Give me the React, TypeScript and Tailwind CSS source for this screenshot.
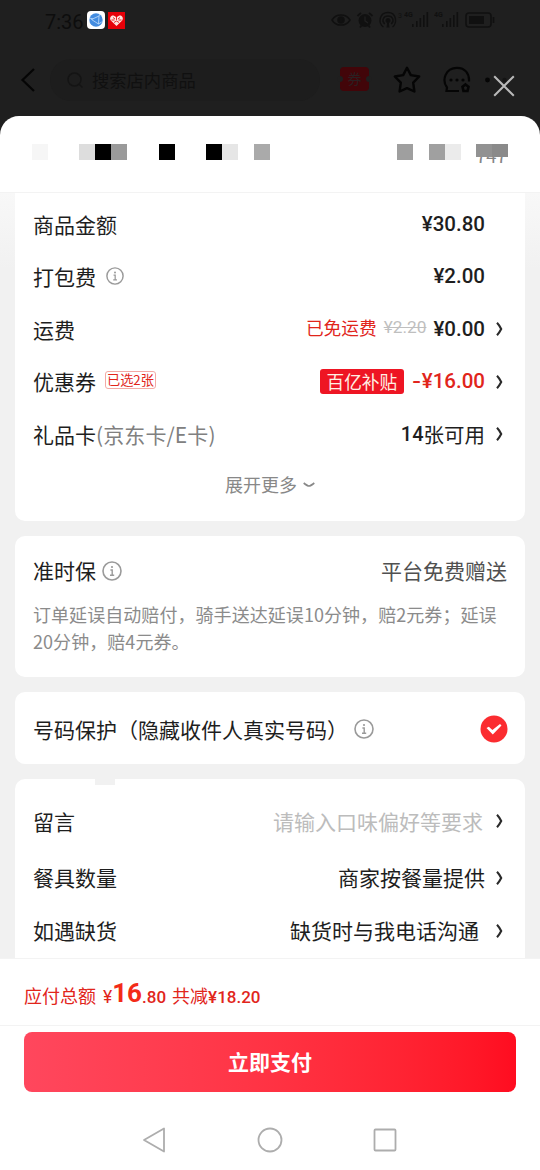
import React from 'react';

const mosaic = [
  { size: 'w-4 ml-8', color: 'bg-[#f6f6f6]' },
  { size: 'w-4 ml-[31px]', color: 'bg-[#dddddd]' },
  { size: 'w-4', color: 'bg-black' },
  { size: 'w-4', color: 'bg-[#9a9a9a]' },
  { size: 'w-4 ml-8', color: 'bg-black' },
  { size: 'w-4 ml-[31px]', color: 'bg-black' },
  { size: 'w-4', color: 'bg-[#e6e6e6]' },
  { size: 'w-4 ml-4', color: 'bg-[#aaaaaa]' },
  { size: 'w-4 ml-[127px]', color: 'bg-[#9f9f9f]' },
  { size: 'w-4 ml-4', color: 'bg-[#a0a0a0]' },
  { size: 'w-4', color: 'bg-[#ebebeb]' },
];

const InfoIcon: React.FC<{ className: string }> = ({ className }) => (
  <svg viewBox="0 0 20 20" className={`shrink-0 ${className}`} fill="none" stroke="#9a9a9a">
    <circle cx="10" cy="10" r="9" strokeWidth="1.6" />
    <circle cx="10" cy="6" r="1.1" fill="#9a9a9a" stroke="none" />
    <path d="M8.4 9H10.2V14M8 14.2H12.2" strokeWidth="1.4" />
  </svg>
);

const Chevron = () => (
  <svg viewBox="0 0 8 16" className="w-2 h-4 ml-[11px] shrink-0" fill="none" stroke="#2a2a2a" strokeWidth="2.1">
    <path d="M1 1.8C2.6 3.5 4.2 6 5.2 8C4.2 10 2.6 12.5 1 14.2" />
  </svg>
);

interface RowProps {
  label: React.ReactNode;
  arrow?: boolean;
  className?: string;
  children: React.ReactNode;
}

const Row: React.FC<RowProps> = ({ label, arrow = false, className = 'h-[52.5px]', children }) => (
  <div className={`flex items-center justify-between pl-[18px] pr-[21px] ${className}`}>
    <div className="flex items-center">{label}</div>
    <div className="flex items-center">
      {children}
      {arrow ? <Chevron /> : <div className="w-[19px]" />}
    </div>
  </div>
);

interface PriceProps {
  size?: string;
  className?: string;
  children: React.ReactNode;
}

const Price: React.FC<PriceProps> = ({ size = 'text-[20.5px] font-medium', className = '', children }) => (
  <span className={`font-[Roboto,'Noto_Sans_CJK_SC',sans-serif] ${size} ${className}`}>{children}</span>
);

const Signal = () => (
  <svg viewBox="0 0 26 18" className="w-[26px] h-[18px]" fill="#101010">
    <text x="0" y="6" fontSize="7" fontFamily="Roboto, sans-serif" fontWeight="700">4G</text>
    <rect x="8" y="13" width="1.6" height="3" />
    <rect x="12" y="10" width="1.6" height="6" />
    <rect x="15.5" y="7" width="1.6" height="9" />
    <rect x="19" y="4" width="1.6" height="12" />
    <rect x="22.5" y="1" width="1.6" height="15" />
  </svg>
);

const StatusBar = () => (
  <div className="h-10 flex items-center pl-[45px] pr-[45px]">
    <span className="w-[42px] font-[Roboto,sans-serif] text-[20px] leading-none text-[#0d0d0d] pt-[3px]">7:36</span>
    {/* Running app badges */}
    <svg viewBox="0 0 18 18" className="w-[18px] h-[18px]">
      <rect width="18" height="18" rx="4" fill="#fff" />
      <circle cx="9" cy="9" r="6.7" fill="#438ce0" />
      <path d="M4.5 8.5L12 5L11.5 13ZM2.5 7L6 8M12 5L13 3M11.5 13L14.7 11" fill="none" stroke="#b7d7fa" strokeWidth="0.9" />
    </svg>
    <svg viewBox="0 0 17 17" className="w-[17px] h-[17px] ml-[3px]">
      <rect width="17" height="17" fill="#e60008" />
      <path d="M8.5 14L2.8 8.5C1 6 3.2 2.8 6 3.7L8.5 5.2L11 3.7C13.8 2.8 16 6 14.2 8.5Z" fill="#ffe3df" />
      <path d="M5 5.5L7 7M12 5.5L10 7M3.5 8H6.5M13.5 8H10.5M8.5 5V8M6 10.5L8.5 9L11 10.5" stroke="#e62a2a" strokeWidth="1" fill="none" />
    </svg>
    <div className="flex items-center ml-auto">
      <svg viewBox="0 0 20 14" className="w-5 h-3.5 mr-[3px]" fill="none" stroke="#101010" strokeWidth="1.5">
        <path d="M1 7C5 .2 15 .2 19 7C15 13.8 5 13.8 1 7Z" />
        <circle cx="10" cy="7" r="3" fill="#101010" />
      </svg>
      <svg viewBox="0 0 18 18" className="w-[18px] h-[18px] ml-[2px]">
        <circle cx="9" cy="9.5" r="6.5" fill="#101010" />
        <path d="M1.5 5L5 1.8M16.5 5L13 1.8M4 16.5L5.5 14.5M14 16.5L12.5 14.5" stroke="#101010" strokeWidth="1.8" />
        <path d="M9 5.5V9.8L12 12" stroke="#1f1f1f" strokeWidth="1.4" fill="none" />
      </svg>
      <svg viewBox="0 0 26 18" className="w-[26px] h-[18px] ml-1" fill="none" stroke="#101010" strokeWidth="1.4">
        <path d="M5.5 16C-.5 12 1.5 1.5 10 1.5S19.5 12 14.5 16" />
        <path d="M6.8 13C3 9.5 5.5 5 10 5S17 9.5 13.2 13" />
        <circle cx="10" cy="9.5" r="1.8" fill="#101010" />
        <path d="M9.2 11L8.5 16.5H11.5L10.8 11" fill="#101010" stroke="none" />
        <text x="20" y="7" fontSize="7" fill="#101010" stroke="none" fontFamily="Roboto, sans-serif">3</text>
      </svg>
      <Signal />
      <div className="w-1" />
      <Signal />
      <svg viewBox="0 0 30 16" className="w-[30px] h-4 ml-[5px]" fill="none" stroke="#101010" strokeWidth="1.6">
        <rect x="1" y="1" width="25" height="14" rx="3" />
        <rect x="4" y="4" width="15" height="8" fill="#101010" stroke="none" />
        <path d="M28.5 5V11" />
      </svg>
    </div>
  </div>
);

const StoreBar = () => (
  <div className="relative h-[76px] flex items-start">
    <svg viewBox="0 0 16 24" className="w-4 h-6 ml-5 mt-7" fill="none" stroke="#050505" strokeWidth="2.2">
      <path d="M14 1L2.5 12L14 23" />
    </svg>
    <div className="flex items-center w-[270px] h-[42px] ml-[14px] mt-[19px] pl-4 rounded-full bg-[#1d1d1d]">
      <svg viewBox="0 0 18 18" className="w-[18px] h-[18px]" fill="none" stroke="#141414" strokeWidth="1.5">
        <circle cx="8.5" cy="8.5" r="6.5" />
        <path d="M13 13L16.5 16.5" />
      </svg>
      <span className="ml-2 text-[17.3px] text-[#101010]">搜索店内商品</span>
    </div>
    <div className="flex items-center justify-center w-[29px] h-6 ml-5 mt-[27px] rounded bg-[#420509] text-[#2a2022] text-[14px] relative">
      券
      <div className="absolute -left-[3px] top-[9px] w-1.5 h-1.5 rounded-full bg-[#1f1f1f]" />
      <div className="absolute -right-[3px] top-[9px] w-1.5 h-1.5 rounded-full bg-[#1f1f1f]" />
    </div>
    <svg viewBox="0 0 28 28" className="w-7 h-7 ml-6 mt-[26px]" fill="none" stroke="#050505" strokeWidth="2.4" strokeLinejoin="round">
      <path d="M14 1.8L17.8 9.1L26.2 10.5L20.2 16.6L21.4 25.5L14 22.2L6.6 25.5L7.8 16.6L1.8 10.5L10.2 9.1Z" />
    </svg>
    <svg viewBox="0 0 28 28" className="w-7 h-7 ml-[22px] mt-[26px]" fill="none" stroke="#050505" strokeWidth="2.2">
      <path d="M16 25H3.5L4 21.5C-1.5 14 2.5 1.8 14 1.8C22 1.8 26.5 7.5 26 15.5" />
      <g fill="#050505" stroke="none">
        <circle cx="8" cy="14" r="1.6" />
        <circle cx="14" cy="14" r="1.6" />
        <circle cx="20" cy="14" r="1.6" />
      </g>
      <path d="M22.5 18.5L25.5 20.8L24.5 25H20.5L19.5 20.8Z" strokeWidth="2.6" />
    </svg>
    <svg viewBox="0 0 26 6" className="w-[26px] h-1.5 ml-[13px] mt-[37px]" fill="#050505">
      <circle cx="3.5" cy="3" r="2.4" />
      <circle cx="20.5" cy="3" r="2.2" fill="#141414" />
    </svg>
    {/* Close sheet */}
    <svg viewBox="0 0 22 22" className="absolute left-[493px] top-[35px] w-[22px] h-[22px]" fill="none" stroke="#b9b9b9" strokeWidth="2">
      <path d="M1.2 1.2L20.8 20.8M20.8 1.2L1.2 20.8" />
    </svg>
  </div>
);

const SheetHeader = () => (
  <div className="flex items-start h-[77px] pt-7 border-b border-[#f3f3f3] bg-white rounded-t-[19px]">
    {mosaic.map((m, i) => (
      <div key={i} className={`h-4 shrink-0 ${m.size} ${m.color}`} />
    ))}
    <div className="relative w-8 ml-[15px] pt-px text-[18.5px] leading-5 text-[#858585]">
      <span className="block">747</span>
      <div className="absolute inset-x-0 top-0 h-[13px] flex">
        <div className="w-4 bg-[#929292]" />
        <div className="w-4 bg-[#8a8a8a]" />
      </div>
    </div>
  </div>
);

const FeeCard = () => (
  <div className="h-[328px] shrink-0 pt-[5px] bg-white rounded-b-[10px]">
    <Row label="商品金额"><Price>¥30.80</Price></Row>
    <Row label={<>打包费<InfoIcon className="w-[18px] h-[18px] ml-[10px] -mt-0.5" /></>}><Price>¥2.00</Price></Row>
    <Row label="运费" arrow>
      <span className="text-[17.7px] text-[#e1251b] relative -top-0.5">已免运费</span>
      <Price size="text-[17.3px]" className="text-[#bfbfbf] line-through ml-[7px] relative -top-0.5">¥2.20</Price>
      <Price className="ml-[7px]">¥0.00</Price>
    </Row>
    <Row
      label={<>优惠券<span className="h-[18px] ml-[9px] -mt-[3px] px-px text-[13.2px] leading-[15px] text-[#e1251b] border border-[#f3aaa5] rounded-[3px]">已选2张</span></>}
      arrow
    >
      <span className="w-[84px] h-[25px] mr-[9px] text-center text-[17.7px] leading-6 text-[#fff0e4] bg-[#ee1523] rounded-[3px]">百亿补贴</span>
      <Price className="text-[#e1251b]"><span className="inline-block scale-x-125 mr-[2px]">-</span>¥16.00</Price>
    </Row>
    <Row label={<>礼品卡<span className="text-[#808080] tracking-[0.1px]">(京东卡/E卡)</span></>} arrow>
      <Price size="text-[20px] font-medium">14</Price><span className="text-[20.5px]">张可用</span>
    </Row>
    <div className="flex items-center justify-center h-[49px] text-[18px] text-[#888]">
      展开更多
      <svg viewBox="0 0 12 8" className="w-3 h-2 ml-1.5" fill="none" stroke="#888" strokeWidth="1.6">
        <path d="M.7 2C3 3.8 4.8 5 6 5S9 3.8 11.3 2" />
      </svg>
    </div>
  </div>
);

const PunctualCard = () => (
  <div className="h-[141px] shrink-0 px-[18px] pt-[19px] bg-white rounded-[10px]">
    <div className="flex items-center h-8">
      准时保
      <InfoIcon className="w-5 h-5 ml-1.5" />
      <span className="ml-auto text-[#505050]">平台免费赠送</span>
    </div>
    <p className="mt-[14px] text-[18px] leading-[27px] tracking-[0.06px] text-[#8b8b8b] whitespace-nowrap">
      订单延误自动赔付，骑手送达延误10分钟，赔2元券；延误
      <br />
      20分钟，赔4元券。
    </p>
  </div>
);

const PrivacyCard = () => (
  <div className="flex items-center h-[72px] shrink-0 pl-[18px] pr-[17px] pb-px bg-white rounded-[10px]">
    <div className="flex items-center pt-1">
      号码保护（隐藏收件人真实号码）
      <InfoIcon className="w-5 h-5 ml-1.5" />
    </div>
    <svg viewBox="0 0 28 28" className="w-7 h-7 ml-auto mt-0.5">
      <circle cx="14" cy="14" r="13.5" fill="#fb2c30" />
      <path d="M6.5 13L8.8 11.7L12.4 15L20 9L21.5 10.6L12.8 19.5Z" fill="#fff" />
    </svg>
  </div>
);

const OrderCard = () => (
  <div className="relative h-[179px] shrink-0 pt-[13px] bg-white rounded-t-[10px]">
    <svg viewBox="0 0 20 6" className="absolute left-20 top-0 w-5 h-1.5" fill="#f1f1f1">
      <path d="M0 0H20V6H0Z" />
    </svg>
    <Row label="留言" arrow className="h-[59px]"><span className="text-[#bcbcbc] pr-[2px]">请输入口味偏好等要求</span></Row>
    <Row label="餐具数量" arrow className="h-[54px]">商家按餐量提供</Row>
    <Row label="如遇缺货" arrow className="h-[52px]"><span className="pr-[6px]">缺货时与我电话沟通</span></Row>
  </div>
);

const PayBar = () => (
  <div className="bg-white">
    <div className="flex items-baseline h-[68px] pt-[17px] pl-6 text-[18px] text-[#e1251b] border-t border-b border-[#f3f3f3]">
      <span>应付总额</span>
      <Price size="text-[17.5px]" className="ml-[7px]">¥</Price>
      <Price size="text-[26px] leading-[36px] font-bold" className="text-[#f32b17] relative -top-px">16</Price>
      <Price size="text-[17px] font-medium">.80</Price>
      <span className="ml-[6px]">共减</span>
      <Price size="text-[17px] font-medium">¥18.20</Price>
    </div>
    <button className="block w-[492px] h-[60px] mx-6 mt-1.5 rounded-lg bg-linear-to-r from-[#ff475d] to-[#ff0c20] text-white text-[21px] font-bold">
      立即支付
    </button>
  </div>
);

const NavBar = () => (
  <div className="flex items-center justify-center h-[78px] pt-[18px] bg-white">
    <div className="flex items-center gap-[89px]">
      <svg viewBox="0 0 26 26" className="w-[26px] h-[26px]" fill="none" stroke="#adadad" strokeWidth="1.8" strokeLinejoin="round">
        <path d="M22 1.5V24.5L2 13Z" />
      </svg>
      <svg viewBox="0 0 26 26" className="w-[26px] h-[26px]" fill="none" stroke="#adadad" strokeWidth="1.8">
        <circle cx="13" cy="13" r="11.5" />
      </svg>
      <svg viewBox="0 0 26 26" className="w-[26px] h-[26px]" fill="none" stroke="#adadad" strokeWidth="1.8">
        <rect x="2.5" y="2.5" width="21" height="21" rx="1" />
      </svg>
    </div>
  </div>
);

const App: React.FC = () => {
  return (
    <div className="flex flex-col w-[540px] h-[1170px] overflow-hidden bg-[#1f1f1f] font-['Noto_Sans_CJK_SC',sans-serif] text-[21px] leading-[1.4] text-[#1e1e1e]">
      <StatusBar />
      <StoreBar />
      <SheetHeader />
      <div className="flex flex-col gap-[15px] h-[765px] px-[15px] overflow-hidden bg-linear-to-b from-[#f8f8f8] to-[#f1f1f1] to-10%">
        <FeeCard />
        <PunctualCard />
        <PrivacyCard />
        <OrderCard />
      </div>
      <PayBar />
      <NavBar />
    </div>
  );
};

export default App;
